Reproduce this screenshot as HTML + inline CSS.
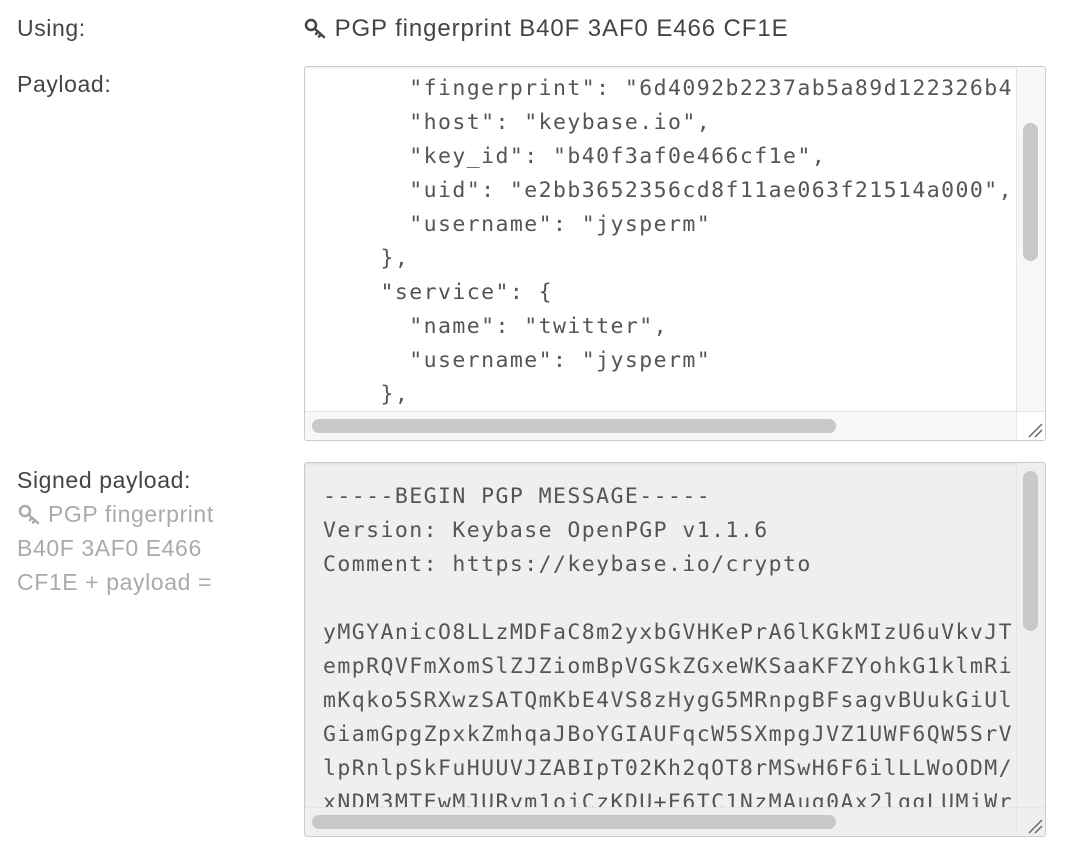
<!DOCTYPE html>
<html><head><style>
body{margin:0;background:#fff;width:1066px;height:852px;overflow:hidden;font-family:"Liberation Sans",sans-serif;color:#444;}
.lbl{position:absolute;left:17px;font-size:23px;line-height:34px;letter-spacing:0.6px;}
.grey{color:#aaa;}
.box{position:absolute;left:304px;width:740px;height:373px;border:1px solid #ccc;border-radius:3px;overflow:hidden;box-shadow:inset 0 1px 2px rgba(0,0,0,.08);}
pre{margin:0;position:absolute;left:18px;font-family:"DejaVu Sans Mono","Liberation Mono",monospace;font-size:21.5px;line-height:34px;color:#555;white-space:pre;letter-spacing:1.43px;}
.vs{position:absolute;right:0;top:0;width:28px;height:344px;background:#f7f7f7;border-left:1px solid #e6e6e6;}
.vt{position:absolute;left:6px;width:15px;border-radius:8px;background:#c8c8c8;}
.hs{position:absolute;left:0;bottom:0;width:711px;height:28px;background:#f7f7f7;border-top:1px solid #e6e6e6;}
.ht{position:absolute;left:7px;top:7px;height:14px;width:524px;border-radius:8px;background:#c8c8c8;}
.cr{position:absolute;right:0;bottom:0;width:28px;height:28px;background:#fff;border-left:1px solid #e6e6e6;border-top:1px solid #e6e6e6;}
</style></head><body>
<div class="lbl" style="top:11px">Using:</div>
<div style="position:absolute;left:303px;top:12px;font-size:24px;line-height:34px;color:#444;letter-spacing:0.9px">
<svg width="24" height="22" viewBox="0 0 24 22" style="vertical-align:-3px"><circle cx="8" cy="8" r="5" fill="none" stroke="#444" stroke-width="2.5"/><path d="M12 12 L21 20 M15 15 l-2 2 M18 17.5 l-2 2" stroke="#444" stroke-width="2.5" fill="none" stroke-linecap="round"/></svg> PGP fingerprint B40F 3AF0 E466 CF1E</div>
<div class="lbl" style="top:67px">Payload:</div>
<div class="box" style="top:66px;background:#fff">
<pre style="top:5px">      "fingerprint": "6d4092b2237ab5a89d122326b4
      "host": "keybase.io",
      "key_id": "b40f3af0e466cf1e",
      "uid": "e2bb3652356cd8f11ae063f21514a000",
      "username": "jysperm"
    },
    "service": {
      "name": "twitter",
      "username": "jysperm"
    },</pre>
<div class="vs"><div class="vt" style="top:56px;height:138px"></div></div>
<div class="hs"><div class="ht"></div></div>
<div class="cr"><svg width="28" height="28"><path d="M25 12 L12 25 M25 18 L18 25" stroke="#666" stroke-width="1.5"/></svg></div>
</div>
<div class="lbl" style="top:463px">Signed payload:</div>
<div class="lbl grey" style="top:497px"><svg width="24" height="22" viewBox="0 0 24 22" style="vertical-align:-3px"><circle cx="8" cy="8" r="5" fill="none" stroke="#aaa" stroke-width="2.5"/><path d="M12 12 L21 20 M15 15 l-2 2 M18 17.5 l-2 2" stroke="#aaa" stroke-width="2.5" fill="none" stroke-linecap="round"/></svg> PGP fingerprint</div>
<div class="lbl grey" style="top:531px">B40F 3AF0 E466</div>
<div class="lbl grey" style="top:565px">CF1E + payload =</div>
<div class="box" style="top:462px;background:#efefef">
<pre style="top:17px">-----BEGIN PGP MESSAGE-----
Version: Keybase OpenPGP v1.1.6
Comment: https://keybase.io/crypto

yMGYAnicO8LLzMDFaC8m2yxbGVHKePrA6lKGkMIzU6uVkvJT
empRQVFmXomSlZJZiomBpVGSkZGxeWKSaaKFZYohkG1klmRi
mKqko5SRXwzSATQmKbE4VS8zHygG5MRnpgBFsagvBUukGiUl
GiamGpgZpxkZmhqaJBoYGIAUFqcW5SXmpgJVZ1UWF6QW5SrV
lpRnlpSkFuHUUVJZABIpT02Kh2qOT8rMSwH6F6ilLLWoODM/
xNDM3MTEwMJURym1ojCzKDU+E6TC1NzMAug0Ax2lggLUMiWr</pre>
<div class="vs" style="background:#efefef"><div class="vt" style="top:8px;height:160px"></div></div>
<div class="hs" style="background:#efefef"><div class="ht"></div></div>
<div class="cr" style="background:#efefef"><svg width="28" height="28"><path d="M25 12 L12 25 M25 18 L18 25" stroke="#666" stroke-width="1.5"/></svg></div>
</div>
</body></html>
